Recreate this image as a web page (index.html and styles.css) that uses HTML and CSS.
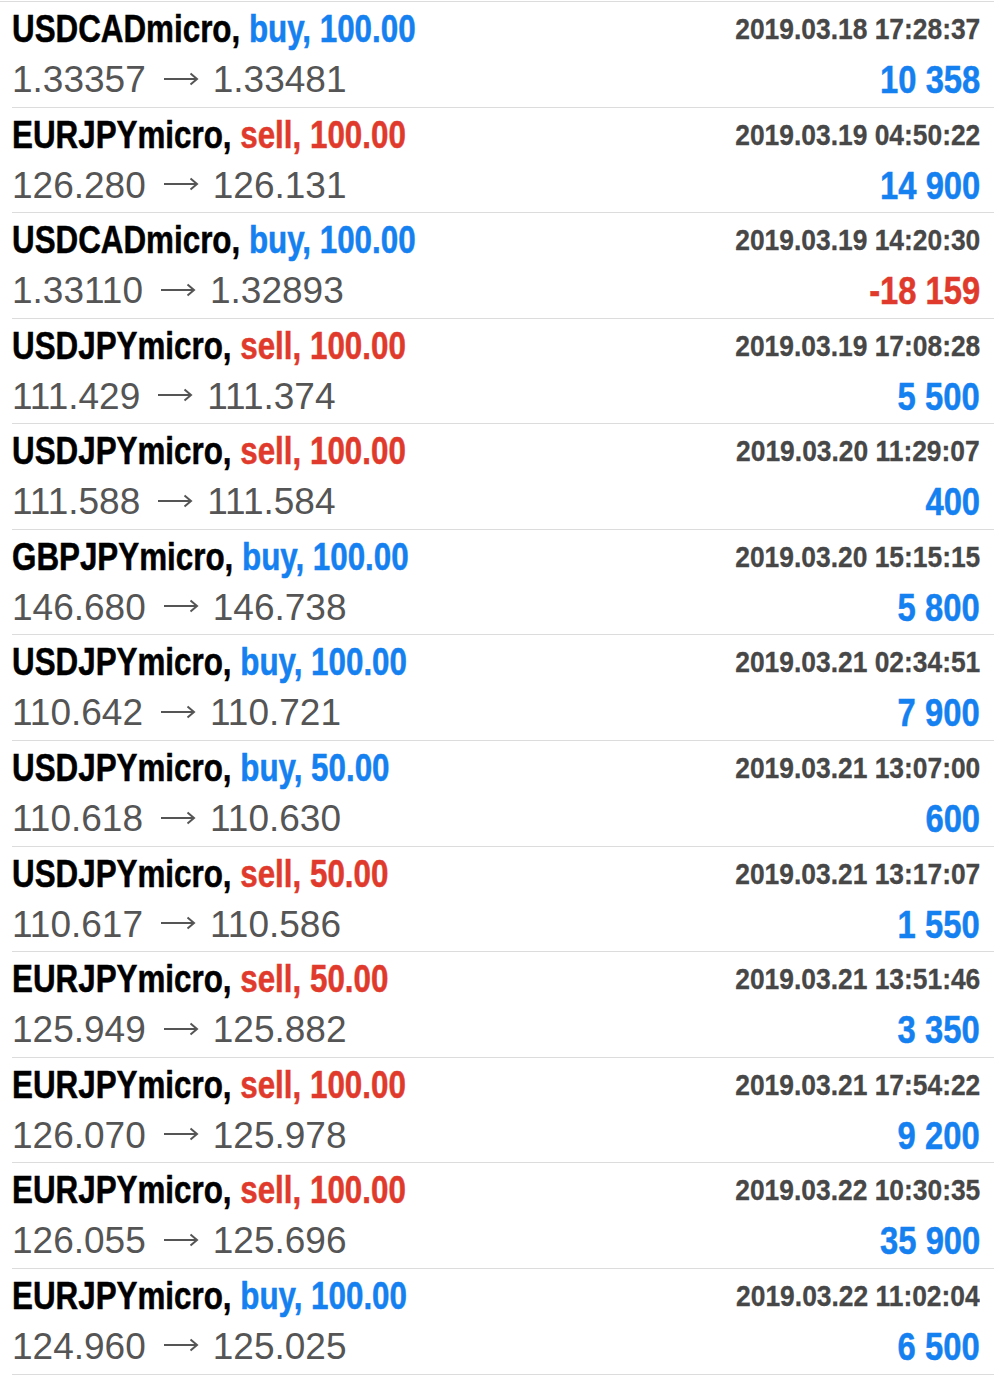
FILE: index.html
```html
<!DOCTYPE html>
<html>
<head>
<meta charset="utf-8">
<link rel="stylesheet" href="styles.css">
</head>
<body>
<div class="list">
  <div class="row"><div class="top"><span class="sym">USDCADmicro, <span class="buy">buy, 100.00</span></span><span class="date">2019.03.18 17:28:37</span></div><div class="bot"><span class="px">1.33357<svg class="arr" viewBox="0 0 36 14" width="36" height="14"><path d="M1 7H34M27.5 1.5L34 7L27.5 12.5"/></svg>1.33481</span><span class="pl pos">10 358</span></div></div>
  <div class="row"><div class="top"><span class="sym">EURJPYmicro, <span class="sell">sell, 100.00</span></span><span class="date">2019.03.19 04:50:22</span></div><div class="bot"><span class="px">126.280<svg class="arr" viewBox="0 0 36 14" width="36" height="14"><path d="M1 7H34M27.5 1.5L34 7L27.5 12.5"/></svg>126.131</span><span class="pl pos">14 900</span></div></div>
  <div class="row"><div class="top"><span class="sym">USDCADmicro, <span class="buy">buy, 100.00</span></span><span class="date">2019.03.19 14:20:30</span></div><div class="bot"><span class="px">1.33110<svg class="arr" viewBox="0 0 36 14" width="36" height="14"><path d="M1 7H34M27.5 1.5L34 7L27.5 12.5"/></svg>1.32893</span><span class="pl neg">-18 159</span></div></div>
  <div class="row"><div class="top"><span class="sym">USDJPYmicro, <span class="sell">sell, 100.00</span></span><span class="date">2019.03.19 17:08:28</span></div><div class="bot"><span class="px">111.429<svg class="arr" viewBox="0 0 36 14" width="36" height="14"><path d="M1 7H34M27.5 1.5L34 7L27.5 12.5"/></svg>111.374</span><span class="pl pos">5 500</span></div></div>
  <div class="row"><div class="top"><span class="sym">USDJPYmicro, <span class="sell">sell, 100.00</span></span><span class="date">2019.03.20 11:29:07</span></div><div class="bot"><span class="px">111.588<svg class="arr" viewBox="0 0 36 14" width="36" height="14"><path d="M1 7H34M27.5 1.5L34 7L27.5 12.5"/></svg>111.584</span><span class="pl pos">400</span></div></div>
  <div class="row"><div class="top"><span class="sym">GBPJPYmicro, <span class="buy">buy, 100.00</span></span><span class="date">2019.03.20 15:15:15</span></div><div class="bot"><span class="px">146.680<svg class="arr" viewBox="0 0 36 14" width="36" height="14"><path d="M1 7H34M27.5 1.5L34 7L27.5 12.5"/></svg>146.738</span><span class="pl pos">5 800</span></div></div>
  <div class="row"><div class="top"><span class="sym">USDJPYmicro, <span class="buy">buy, 100.00</span></span><span class="date">2019.03.21 02:34:51</span></div><div class="bot"><span class="px">110.642<svg class="arr" viewBox="0 0 36 14" width="36" height="14"><path d="M1 7H34M27.5 1.5L34 7L27.5 12.5"/></svg>110.721</span><span class="pl pos">7 900</span></div></div>
  <div class="row"><div class="top"><span class="sym">USDJPYmicro, <span class="buy">buy, 50.00</span></span><span class="date">2019.03.21 13:07:00</span></div><div class="bot"><span class="px">110.618<svg class="arr" viewBox="0 0 36 14" width="36" height="14"><path d="M1 7H34M27.5 1.5L34 7L27.5 12.5"/></svg>110.630</span><span class="pl pos">600</span></div></div>
  <div class="row"><div class="top"><span class="sym">USDJPYmicro, <span class="sell">sell, 50.00</span></span><span class="date">2019.03.21 13:17:07</span></div><div class="bot"><span class="px">110.617<svg class="arr" viewBox="0 0 36 14" width="36" height="14"><path d="M1 7H34M27.5 1.5L34 7L27.5 12.5"/></svg>110.586</span><span class="pl pos">1 550</span></div></div>
  <div class="row"><div class="top"><span class="sym">EURJPYmicro, <span class="sell">sell, 50.00</span></span><span class="date">2019.03.21 13:51:46</span></div><div class="bot"><span class="px">125.949<svg class="arr" viewBox="0 0 36 14" width="36" height="14"><path d="M1 7H34M27.5 1.5L34 7L27.5 12.5"/></svg>125.882</span><span class="pl pos">3 350</span></div></div>
  <div class="row"><div class="top"><span class="sym">EURJPYmicro, <span class="sell">sell, 100.00</span></span><span class="date">2019.03.21 17:54:22</span></div><div class="bot"><span class="px">126.070<svg class="arr" viewBox="0 0 36 14" width="36" height="14"><path d="M1 7H34M27.5 1.5L34 7L27.5 12.5"/></svg>125.978</span><span class="pl pos">9 200</span></div></div>
  <div class="row"><div class="top"><span class="sym">EURJPYmicro, <span class="sell">sell, 100.00</span></span><span class="date">2019.03.22 10:30:35</span></div><div class="bot"><span class="px">126.055<svg class="arr" viewBox="0 0 36 14" width="36" height="14"><path d="M1 7H34M27.5 1.5L34 7L27.5 12.5"/></svg>125.696</span><span class="pl pos">35 900</span></div></div>
  <div class="row"><div class="top"><span class="sym">EURJPYmicro, <span class="buy">buy, 100.00</span></span><span class="date">2019.03.22 11:02:04</span></div><div class="bot"><span class="px">124.960<svg class="arr" viewBox="0 0 36 14" width="36" height="14"><path d="M1 7H34M27.5 1.5L34 7L27.5 12.5"/></svg>125.025</span><span class="pl pos">6 500</span></div></div>
</div>
</body>
</html>
```

FILE: styles.css
```css
html, body {
  margin: 0;
  padding: 0;
  background: #ffffff;
}
.list {
  margin-top: 1px;
  padding-left: 12px;
  border-top: 1px solid #dcdcdc;
}
.row {
  height: 104.58px;
  border-bottom: 1px solid #dcdcdc;
  padding-right: 14px;
  display: flex;
  flex-direction: column;
}
.top, .bot {
  display: flex;
  justify-content: space-between;
  align-items: flex-start;
}
.top {
  height: 52px;
  flex: none;
}
.bot {
  flex: 1;
}
.sym {
  display: inline-block;
  font-family: "Liberation Sans", Arial, sans-serif;
  font-weight: bold;
  font-size: 38px;
  line-height: 55.5px;
  height: 52px;
  color: #000;
  white-space: nowrap;
  -webkit-text-stroke: 0.5px currentColor;
  transform: scaleX(0.825);
  transform-origin: left center;
}
.buy { color: #1580f0; }
.sell { color: #e03a2c; }
.date {
  display: inline-block;
  font-family: "Liberation Sans", Arial, sans-serif;
  font-weight: bold;
  font-size: 29px;
  line-height: 54px;
  height: 52px;
  color: #474747;
  white-space: nowrap;
  -webkit-text-stroke: 0.3px currentColor;
  transform: scaleX(0.91);
  transform-origin: right center;
}
.px {
  font-family: "Liberation Sans", Arial, sans-serif;
  font-size: 37px;
  line-height: 52.3px;
  color: #555555;
  white-space: nowrap;
}
.arr {
  vertical-align: 6.5px;
  margin: 0 14px 0 17px;
  fill: none;
  stroke: #555555;
  stroke-width: 2;
}
.pl {
  display: inline-block;
  font-family: "Liberation Sans", Arial, sans-serif;
  font-weight: bold;
  font-size: 39px;
  line-height: 51px;
  white-space: nowrap;
  -webkit-text-stroke: 0.5px currentColor;
  transform: scaleX(0.84);
  transform-origin: right center;
}
.pos { color: #1580f0; }
.neg { color: #e03a2c; }
```
